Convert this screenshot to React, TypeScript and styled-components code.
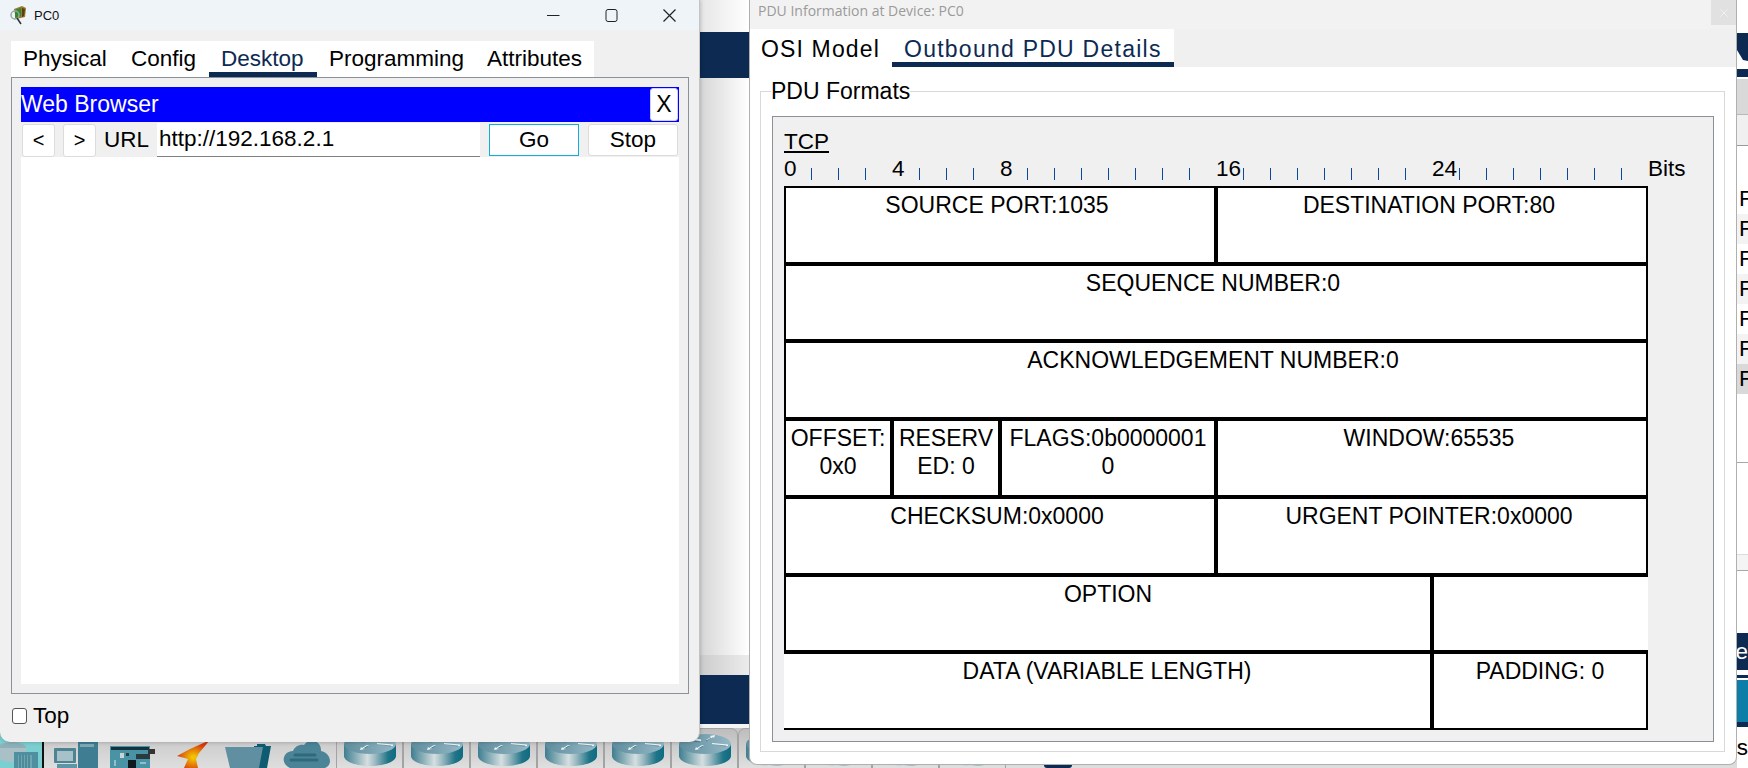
import React, { useId } from "react";
import styled, { createGlobalStyle } from "styled-components";

const Global = createGlobalStyle`
  html, body { margin: 0; padding: 0; background: #fff; }
  * { box-sizing: border-box; }
  body { font-family: "Liberation Sans", Arial, sans-serif; font-size: 22.5px; color: #000; }
`;

const Desktop = styled.div`
  position: relative;
  width: 1748px;
  height: 768px;
  overflow: hidden;
  display: grid;
  grid-template-columns: 1737px 11px;
`;

/* ---------- application behind the windows ---------- */
const Backdrop = styled.div`
  display: grid;
  grid-template-rows: 32px 46px 577px 20px 49px 4px 40px;
  min-width: 0;
`;
const TopBand = styled.div`
  background: linear-gradient(90deg, #e6e6e6 700px, #fff 749px);
`;
const NavyBand = styled.div`
  background: #0c2a52;
`;
const Workspace = styled.div`
  background: linear-gradient(90deg, #d6d6d6 700px, #fff 749px);
`;
const GreyBand = styled.div`
  background: linear-gradient(90deg, #cccccc 700px, #ececec 749px);
`;
const Gap = styled.div`
  background: #f4f4f4;
`;
const Toolbar = styled.div`
  display: flex;
  align-items: flex-start;
  background: linear-gradient(#c4c4c4, #dedede);
  overflow: hidden;
`;
const DeviceGroup = styled.div`
  display: flex;
  align-items: flex-end;
  width: 336px;
  height: 40px;
  flex: none;
`;
const SelectedTile = styled.div`
  width: 44px;
  height: 40px;
  flex: none;
  background: #7ccfd0;
  border-right: 2px solid #111;
  display: flex;
  align-items: flex-end;
`;
const DeviceIcon = styled.svg<{ $left: number }>`
  margin-left: ${(p) => p.$left}px;
  flex: none;
  display: block;
`;
const RouterButton = styled.div`
  width: 67px;
  height: 44px;
  flex: none;
  border: 1px solid #a3a3a3;
  border-radius: 7px 7px 0 0;
  background: linear-gradient(#bdbdbd, #e2e2e2);
  padding: 5px 0 0 7px;
`;
const RouterSvg = styled.svg`
  display: block;
`;
const NavyMark = styled.div`
  width: 28px;
  height: 40px;
  flex: none;
  margin-left: 38px;
  display: flex;
  align-items: flex-end;
  &::after {
    content: "";
    width: 28px;
    height: 3px;
    background: #0c2a52;
    border-radius: 0 0 10px 10px;
  }
`;

/* ---------- sliver of the side panel at the right edge ---------- */
const SideStrip = styled.div`
  display: flex;
  flex-direction: column;
  overflow: hidden;
  background: #fff;
`;
const SideSpace = styled.div<{ $h: number; $bg?: string; $line?: string }>`
  height: ${(p) => p.$h}px;
  flex: none;
  background: ${(p) => p.$bg || "#fff"};
  border-bottom: ${(p) => (p.$line ? `1px solid ${p.$line}` : "none")};
`;
const SideArrow = styled.svg`
  display: block;
  flex: none;
`;
const SideRow = styled.div<{ $bg: string }>`
  height: 30px;
  flex: none;
  line-height: 30px;
  padding-left: 2px;
  background: ${(p) => p.$bg};
  white-space: nowrap;
`;
const SideWord = styled.div<{ $h: number; $bg: string; $color: string }>`
  height: ${(p) => p.$h}px;
  flex: none;
  line-height: ${(p) => p.$h}px;
  display: flex;
  justify-content: flex-end;
  white-space: nowrap;
  background: ${(p) => p.$bg};
  color: ${(p) => p.$color};
`;

/* ---------- PC0 window ---------- */
const PcWindow = styled.section`
  position: absolute;
  left: 0;
  top: 0;
  width: 700px;
  height: 742px;
  display: flex;
  flex-direction: column;
  background: #f0f0f0;
  border-right: 1px solid #c4c4c4;
  border-radius: 0 0 10px 10px;
  box-shadow: 0 0 4px rgba(0, 0, 0, 0.25);
`;
const PcTitleBar = styled.header`
  height: 30px;
  flex: none;
  display: flex;
  align-items: center;
  background: #eff4f9;
  padding-left: 9px;
`;
const PcTitle = styled.span`
  font-size: 13px;
  margin-left: 6px;
  color: #111;
  flex: 1;
`;
const WinControls = styled.div`
  display: flex;
  align-items: center;
  padding-right: 23px;
  gap: 45px;
`;
const PcTabs = styled.nav`
  display: flex;
  align-self: flex-start;
  height: 36px;
  margin: 11px 0 0 11px;
  background: #fff;
`;
const PcTab = styled.div<{ $active?: boolean; $w: number }>`
  width: ${(p) => p.$w}px;
  height: 36px;
  padding-left: 12px;
  line-height: 35px;
  white-space: nowrap;
  color: ${(p) => (p.$active ? "#0c2a52" : "#000")};
  border-bottom: 5px solid ${(p) => (p.$active ? "#0c2a52" : "transparent")};
`;
const DesktopPanel = styled.div`
  margin-left: 11px;
  width: 678px;
  height: 617px;
  flex: none;
  border: 1px solid #8a919b;
  padding: 9px;
  display: flex;
  flex-direction: column;
`;
const BlueBar = styled.div`
  height: 35px;
  flex: none;
  background: #0000ff;
  color: #fff;
  font-size: 23px;
  display: flex;
  align-items: center;
  justify-content: space-between;
  padding-right: 1px;
`;
const CloseSquare = styled.button`
  width: 28px;
  height: 33px;
  padding: 0;
  border: 1px solid #d0d0ff;
  border-radius: 3px;
  background: #fff;
  font: inherit;
  color: #000;
`;
const UrlRow = styled.div`
  height: 34px;
  flex: none;
  margin-top: 1px;
  display: flex;
  align-items: center;
  padding-left: 1px;
`;
const ArrowButton = styled.button<{ $left?: number }>`
  width: 33px;
  height: 33px;
  margin-left: ${(p) => p.$left || 0}px;
  padding: 0;
  background: #fff;
  border: 1px solid #dcdcdc;
  border-radius: 3px;
  font: inherit;
  font-size: 20px;
  color: #000;
`;
const UrlLabel = styled.span`
  margin-left: 8px;
  width: 53px;
  flex: none;
`;
const UrlField = styled.div`
  width: 323px;
  height: 34px;
  flex: none;
  line-height: 32px;
  padding-left: 2px;
  background: #fff;
  border-bottom: 1px solid #808080;
`;
const ActionButton = styled.button<{ $focus?: boolean; $left: number }>`
  width: 90px;
  height: 32px;
  flex: none;
  margin-left: ${(p) => p.$left}px;
  padding: 0;
  background: #fff;
  font: inherit;
  color: #000;
  border: 1px solid ${(p) => (p.$focus ? "#12aed8" : "#dcdcdc")};
  border-radius: ${(p) => (p.$focus ? "0" : "3px")};
`;
const BrowserPage = styled.div`
  flex: 1;
  background: #fff;
`;
const TopRow = styled.label`
  flex: 1;
  display: flex;
  align-items: center;
  padding: 0 0 4px 12px;
  gap: 6px;
`;
const TopCheck = styled.input`
  appearance: none;
  width: 15px;
  height: 16px;
  margin: 0;
  border: 1px solid #555;
  border-radius: 3px;
  background: #fff;
`;

/* ---------- PDU window ---------- */
const PduWindow = styled.section`
  position: absolute;
  left: 749px;
  top: 0;
  width: 988px;
  height: 765px;
  display: flex;
  flex-direction: column;
  background: #fff;
  border: 1px solid #b0b0b0;
  border-top: none;
  border-radius: 0 0 8px 8px;
`;
const PduTitleBar = styled.header`
  height: 29px;
  flex: none;
  display: flex;
  justify-content: space-between;
  background: #f2f2f2;
  padding: 0 0 4px 8px;
`;
const PduTitle = styled.span`
  font-family: "Open Sans", sans-serif;
  font-size: 14px;
  line-height: 22px;
  color: #9a9a9a;
`;
const PduClose = styled.div`
  width: 25px;
  height: 25px;
  background: #e1e1e1;
  display: flex;
  align-items: center;
  justify-content: center;
`;
const PduTabBar = styled.nav`
  height: 38px;
  flex: none;
  background: #f0f0f0;
  display: flex;
`;
const PduTab = styled.div<{ $active?: boolean; $w: number; $pad: number; $spacing: number }>`
  width: ${(p) => p.$w}px;
  height: 38px;
  padding-left: ${(p) => p.$pad}px;
  background: #fff;
  font-size: 23px;
  letter-spacing: ${(p) => p.$spacing}px;
  line-height: 40px;
  white-space: nowrap;
  color: ${(p) => (p.$active ? "#0c2a52" : "#000")};
  border-bottom: 5px solid ${(p) => (p.$active ? "#0c2a52" : "#fff")};
`;
const Formats = styled.fieldset`
  margin: 11px 11px 0 10px;
  padding: 11px 10px 9px 11px;
  border: 1px solid #d9d9d9;
  min-width: 0;
`;
const FormatsLegend = styled.legend`
  padding: 0;
  margin-left: -1px;
  font-size: 23px;
  line-height: 27px;
`;
const FormatPanel = styled.div`
  height: 626px;
  border: 1px solid #8a8f98;
  background: #f0f0f0;
  padding: 11px 0 0 11px;
`;
const ProtocolName = styled.div`
  line-height: 27px;
  text-decoration: underline;
  text-underline-offset: 2px;
`;
const Ruler = styled.div`
  display: flex;
  align-items: flex-end;
  height: 27px;
  line-height: 27px;
  margin-bottom: 4px;
`;
const RulerSlot = styled.div`
  width: 27px;
  flex: none;
  height: 27px;
  display: flex;
  align-items: flex-end;
`;
const RulerLabel = styled.span`
  line-height: 27px;
  align-self: flex-start;
`;
const Tick = styled.i`
  display: block;
  width: 1px;
  height: 12px;
  margin: 0 0 2px 0;
  background: #0a4a9c;
`;
const RulerUnit = styled.span`
  margin-left: 0;
`;
const HeaderTable = styled.div`
  display: grid;
  grid-template-columns: repeat(32, 27px);
  grid-template-rows: repeat(7, 1fr);
  width: 864px;
  height: 544px;
  background: #fff;
`;
const Cell = styled.div<{ $span: number; $noLeft?: boolean; $noRight?: boolean; $leaning?: boolean }>`
  grid-column: span ${(p) => p.$span};
  border-style: solid;
  border-color: #000;
  border-width: 2px ${(p) => (p.$noRight ? 0 : 2)}px 2px ${(p) => (p.$noLeft ? 0 : 2)}px;
  padding: ${(p) => (p.$leaning ? "4px 7px 0 1px" : "4px 4px 0")};
  font-size: 23px;
  text-align: center;
  line-height: 27.5px;
  overflow-wrap: anywhere;
  min-width: 0;
`;

/* ---------- drawings ---------- */
const RouterIcon = () => {
  const bodyId = useId();
  const topId = useId();
  return (
    <RouterSvg width="52" height="33" viewBox="0 0 52 33">
      <defs>
        <linearGradient id={bodyId} x1="0" x2="1" y1="0" y2="0">
          <stop offset="0" stopColor="#3e7d90" />
          <stop offset="0.25" stopColor="#8fb3bb" />
          <stop offset="0.45" stopColor="#d5dfe1" />
          <stop offset="0.6" stopColor="#9bb9c1" />
          <stop offset="0.85" stopColor="#1f7488" />
          <stop offset="1" stopColor="#0f6b82" />
        </linearGradient>
        <linearGradient id={topId} x1="0" x2="1" y1="0" y2="0">
          <stop offset="0" stopColor="#5f8d9d" />
          <stop offset="1" stopColor="#94b8c6" />
        </linearGradient>
      </defs>
      <path d="M0 10v12c0 5.500 11.600 10 26 10s26-4.500 26-10V10z" fill={`url(#${bodyId})`} />
      <ellipse cx="26" cy="10" rx="26" ry="10" fill={`url(#${topId})`} />
      <path d="M27 6l5-3-1-1 5-1-1 3-1-1-5 3zM33 9l16 1.500v1.500l-16-1zM25 11l-5 3 1 1-5 1 1-3 1 1 5-3zM22 7l-8-1V4.500l8 1z" fill="#f2f6f7" />
      <path d="M27 7l5-3M33 10.500l14 1.500M24 12l-5 3M21 8l-7-1" stroke="#1f5a6c" strokeWidth="0.800" opacity="0.6" />
    </RouterSvg>
  );
};

const MinIcon = () => (
  <svg width="13" height="13" viewBox="0 0 13 13"><path d="M0 6.500h12.500" stroke="#222" strokeWidth="1" /></svg>
);
const MaxIcon = () => (
  <svg width="13" height="13" viewBox="0 0 13 13"><rect x="1" y="0.500" width="11" height="12" rx="2" fill="none" stroke="#222" /></svg>
);
const XIcon = ({ size = 13, color = "#222" }: { size?: number; color?: string }) => (
  <svg width={size} height={size} viewBox="0 0 13 13"><path d="M0.500 0.500l12 12M12.500 0.500l-12 12" stroke={color} strokeWidth="1.200" /></svg>
);
const PacketTracerIcon = () => (
  <svg width="19" height="20" viewBox="0 0 19 20">
    <path d="M5 4l8-3 4 2-1 9-9 2z" fill="#9a7a2e" />
    <path d="M6 5l6-2v8l-6 2z" fill="#2f8a2f" />
    <path d="M13 3l3 1-1 7-2 1z" fill="#5c3f16" />
    <circle cx="6" cy="10" r="4" fill="none" stroke="#9aa3a8" strokeWidth="1.500" />
    <path d="M8 13l4 6" stroke="#333" strokeWidth="1.500" />
  </svg>
);

const RULER_LABELS: Record<number, string> = { 0: "0", 4: "4", 8: "8", 16: "16", 24: "24" };
const SIDE_ROWS = ["#fff", "#f3f3f3", "#fff", "#f3f3f3", "#fff", "#f3f3f3", "#d9d9d9"];
const ROUTER_COUNT_LEFT = 10;

export default function App() {
  return (
    <Desktop>
      <Global />
      <Backdrop>
        <TopBand />
        <NavyBand />
        <Workspace />
        <GreyBand />
        <NavyBand />
        <Gap />
        <Toolbar>
          <DeviceGroup>
            <SelectedTile>
              <svg width="42" height="26" viewBox="0 0 42 26">
                <ellipse cx="12" cy="6" rx="14" ry="6" fill="#8fb0ba" />
                <path d="M-2 6v8c0 3 6 6 14 6s14-3 14-6V6z" fill="#a8c0c6" />
                <path d="M14 10h24v16H14z" fill="#4f8f9f" />
                <path d="M18 13h14v13H18z" fill="#6fa6b3" />
                <path d="M20 13v13M23 13v13M26 13v13M29 13v13" stroke="#2f6f80" />
              </svg>
            </SelectedTile>
            <DeviceIcon $left={10} width="44" height="28" viewBox="0 0 44 28">
              <rect x="0" y="8" width="22" height="15" rx="1" fill="#4e8394" />
              <rect x="3" y="11" width="16" height="10" fill="#a7c1c9" />
              <rect x="3" y="24" width="20" height="4" fill="#5f95a5" />
              <rect x="24" y="0" width="20" height="28" fill="#3f7e92" />
              <rect x="26" y="4" width="14" height="3" fill="#7fa8b5" />
            </DeviceIcon>
            <DeviceIcon $left={12} width="45" height="22" viewBox="0 0 45 22">
              <rect x="0" y="0" width="40" height="22" fill="#4a93a5" />
              <rect x="1" y="1" width="38" height="3" fill="#12343f" />
              <rect x="26" y="8" width="14" height="5" fill="#2a3b40" />
              <rect x="38" y="3" width="7" height="5" fill="#333" />
              <rect x="18" y="14" width="8" height="8" fill="#0e1a1e" />
              <rect x="10" y="7" width="4" height="5" fill="#c9d4d6" />
              <rect x="16" y="7" width="3" height="3" fill="#2a3b40" />
              <rect x="4" y="14" width="2" height="6" fill="#8cc0cc" />
              <rect x="30" y="16" width="6" height="2" fill="#8cc0cc" />
            </DeviceIcon>
            <DeviceIcon $left={22} width="33" height="28" viewBox="0 0 33 28">
              <defs>
                <radialGradient id="bolt" cx="0.5" cy="0.62" r="0.5">
                  <stop offset="0.1" stopColor="#f2c400" />
                  <stop offset="1" stopColor="#d63a10" />
                </radialGradient>
              </defs>
              <path d="M33 0L13 9 0 16l11 3-4 9h14l-2-9 3-6z" fill="url(#bolt)" />
            </DeviceIcon>
            <DeviceIcon $left={15} width="46" height="24" viewBox="0 0 46 24">
              <path d="M29 2h3V0h8l1 2h5l-4 22H29z" fill="#0f5c72" />
              <path d="M0 3h38l-4 21H5z" fill="#5f8fa0" />
            </DeviceIcon>
            <DeviceIcon $left={11} width="48" height="30" viewBox="0 0 48 30">
              <path d="M8 30C2 27 0 22 3 17c2-3 5-4 8-4 2-5 7-7 11-6 3-5 11-6 15-1 2 3 2 5 2 7 5 1 9 5 9 10 0 3-2 6-5 7z" fill="#4b8496" />
              <path d="M13 17h20M9 22h26" stroke="#2f6a7c" strokeWidth="3" strokeLinecap="round" />
            </DeviceIcon>
          </DeviceGroup>
          {Array.from({ length: ROUTER_COUNT_LEFT }, (_, i) => (
            <RouterButton key={i}>
              <RouterIcon />
            </RouterButton>
          ))}
          <NavyMark />
        </Toolbar>
      </Backdrop>

      <SideStrip>
        <SideSpace $h={33} />
        <SideArrow width="11" height="28" viewBox="0 0 11 28">
          <path d="M0 0h11v28L6 27 0 17z" fill="#0c2a52" />
        </SideArrow>
        <SideSpace $h={8} />
        <SideSpace $h={8} $bg="#0c2a52" />
        <SideSpace $h={2} />
        <SideSpace $h={36} $bg="#d9d9d9" $line="#b8b8b8" />
        <SideSpace $h={31} $bg="#f0f0f0" $line="#9a9a9a" />
        <SideSpace $h={38} />
        {SIDE_ROWS.map((bg, i) => (
          <SideRow key={i} $bg={bg}>F</SideRow>
        ))}
        <SideSpace $h={69} $line="#a8a8a8" />
        <SideSpace $h={92} $line="#dcdcdc" />
        <SideSpace $h={16} $bg="#f4f4f4" $line="#a8a8a8" />
        <SideSpace $h={62} />
        <SideWord $h={37} $bg="#0c2a52" $color="#fff">e</SideWord>
        <SideSpace $h={5} />
        <SideSpace $h={3} $bg="#0c2a52" />
        <SideSpace $h={2} />
        <SideSpace $h={42} $bg="#0d7ea8" />
        <SideSpace $h={5} $bg="#0c2a52" />
        <SideWord $h={41} $bg="#fff" $color="#000">us</SideWord>
      </SideStrip>

      <PcWindow>
        <PcTitleBar>
          <PacketTracerIcon />
          <PcTitle>PC0</PcTitle>
          <WinControls>
            <MinIcon />
            <MaxIcon />
            <XIcon />
          </WinControls>
        </PcTitleBar>
        <PcTabs>
          <PcTab $w={108}>Physical</PcTab>
          <PcTab $w={90}>Config</PcTab>
          <PcTab $w={108} $active>Desktop</PcTab>
          <PcTab $w={158}>Programming</PcTab>
          <PcTab $w={119}>Attributes</PcTab>
        </PcTabs>
        <DesktopPanel>
          <BlueBar>
            <span>Web Browser</span>
            <CloseSquare>X</CloseSquare>
          </BlueBar>
          <UrlRow>
            <ArrowButton>&lt;</ArrowButton>
            <ArrowButton $left={8}>&gt;</ArrowButton>
            <UrlLabel>URL</UrlLabel>
            <UrlField>http://192.168.2.1</UrlField>
            <ActionButton $focus $left={9}>Go</ActionButton>
            <ActionButton $left={9}>Stop</ActionButton>
          </UrlRow>
          <BrowserPage />
        </DesktopPanel>
        <TopRow>
          <TopCheck type="checkbox" />
          Top
        </TopRow>
      </PcWindow>

      <PduWindow>
        <PduTitleBar>
          <PduTitle>PDU Information at Device: PC0</PduTitle>
          <PduClose>
            <XIcon size={8} color="#f6f6f6" />
          </PduClose>
        </PduTitleBar>
        <PduTabBar>
          <PduTab $w={142} $pad={11} $spacing={1.15}>OSI Model</PduTab>
          <PduTab $w={282} $pad={12} $spacing={1.25} $active>Outbound PDU Details</PduTab>
        </PduTabBar>
        <Formats>
          <FormatsLegend>PDU Formats</FormatsLegend>
          <FormatPanel>
            <ProtocolName>TCP</ProtocolName>
            <Ruler>
              {Array.from({ length: 32 }, (_, n) => (
                <RulerSlot key={n}>
                  {RULER_LABELS[n] ? <RulerLabel>{RULER_LABELS[n]}</RulerLabel> : <Tick />}
                </RulerSlot>
              ))}
              <RulerUnit>Bits</RulerUnit>
            </Ruler>
            <HeaderTable>
              <Cell $span={16} $leaning>SOURCE PORT:1035</Cell>
              <Cell $span={16} $leaning>DESTINATION PORT:80</Cell>
              <Cell $span={32} $leaning>SEQUENCE NUMBER:0</Cell>
              <Cell $span={32} $leaning>ACKNOWLEDGEMENT NUMBER:0</Cell>
              <Cell $span={4}>OFFSET: 0x0</Cell>
              <Cell $span={4}>RESERVED: 0</Cell>
              <Cell $span={8}>FLAGS:0b00000010</Cell>
              <Cell $span={16} $leaning>WINDOW:65535</Cell>
              <Cell $span={16} $leaning>CHECKSUM:0x0000</Cell>
              <Cell $span={16} $leaning>URGENT POINTER:0x0000</Cell>
              <Cell $span={24}>OPTION</Cell>
              <Cell $span={8} $noRight />
              <Cell $span={24} $noLeft>DATA (VARIABLE LENGTH)</Cell>
              <Cell $span={8}>PADDING: 0</Cell>
            </HeaderTable>
          </FormatPanel>
        </Formats>
      </PduWindow>
    </Desktop>
  );
}
